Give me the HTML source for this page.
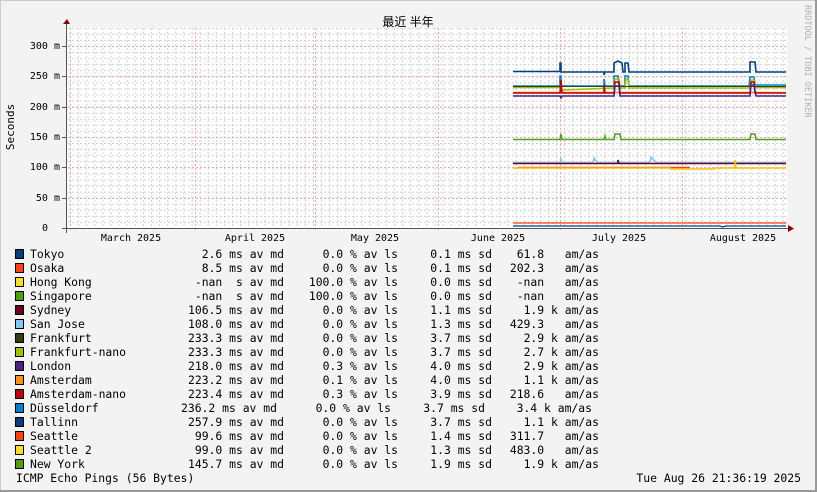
<!DOCTYPE html>
<html><head><meta charset="utf-8"><style>
html,body{margin:0;padding:0;background:#f3f3f3}
svg{display:block}
text{font-family:"DejaVu Sans Mono","Liberation Mono",monospace;font-size:11.4px;fill:#000;white-space:pre}
.s{font-size:10px}
</style></head><body>
<svg width="817" height="492" viewBox="0 0 817 492" xmlns="http://www.w3.org/2000/svg">
<defs>
<pattern id="gv" x="70" y="0" width="8.1" height="4" patternUnits="userSpaceOnUse"><rect x="0" y="0" width="1" height="2" fill="#d0d0d0"/></pattern>
<pattern id="gh" x="0" y="228" width="4" height="6.067" patternUnits="userSpaceOnUse"><rect x="0" y="0" width="2" height="1" fill="#d0d0d0"/></pattern>
<pattern id="mh" x="0" y="0" width="4" height="1" patternUnits="userSpaceOnUse"><rect width="2" height="1" fill="#f0a8a8"/></pattern>
<pattern id="mv" x="0" y="0" width="1" height="4" patternUnits="userSpaceOnUse"><rect width="1" height="2" fill="#f0a8a8"/></pattern>
</defs>
<rect x="0" y="0" width="817" height="492" fill="#f3f3f3"/>
<rect x="0" y="0" width="817" height="1" fill="#ccc"/><rect x="0" y="0" width="1" height="492" fill="#ccc"/>
<rect x="815" y="0" width="2" height="492" fill="#999"/><rect x="0" y="490" width="817" height="2" fill="#999"/>
<rect x="67" y="27" width="720" height="201" fill="#fff"/>
<rect x="68" y="27" width="719" height="201" fill="url(#gv)"/>
<rect x="68" y="27" width="719" height="201" fill="url(#gh)"/>
<g fill="url(#mh)">
<rect x="67" y="46" width="720" height="1"/><rect x="67" y="76" width="720" height="1"/><rect x="67" y="107" width="720" height="1"/><rect x="67" y="137" width="720" height="1"/><rect x="67" y="167" width="720" height="1"/><rect x="67" y="198" width="720" height="1"/>
</g>
<g fill="url(#mv)">
<rect x="70" y="27" width="1" height="204"/><rect x="195" y="27" width="1" height="204"/><rect x="315" y="27" width="1" height="204"/><rect x="438" y="27" width="1" height="204"/><rect x="560" y="27" width="1" height="204"/><rect x="682" y="27" width="1" height="204"/>
</g>
<rect x="66" y="24" width="1" height="209" fill="#555"/>
<rect x="62" y="228" width="728" height="1" fill="#555"/>
<path d="M63 24 L67 19 L70 24 Z" fill="#800"/>
<path d="M788 225 L794 228.5 L788 232 Z" fill="#800"/>
<g fill="#555"><rect x="62" y="46" width="4" height="1"/><rect x="62" y="76" width="4" height="1"/><rect x="62" y="107" width="4" height="1"/><rect x="62" y="137" width="4" height="1"/><rect x="62" y="167" width="4" height="1"/><rect x="62" y="198" width="4" height="1"/></g>
<g text-anchor="end">
<text x="60" y="49" class="s">300 m</text><text x="60" y="79" class="s">250 m</text><text x="60" y="110" class="s">200 m</text><text x="60" y="140" class="s">150 m</text><text x="60" y="170" class="s">100 m</text><text x="60" y="201" class="s">50 m</text><text x="48" y="231" class="s">0</text>
</g>
<g text-anchor="middle">
<text x="131" y="241" class="s">March 2025</text><text x="255" y="241" class="s">April 2025</text><text x="375" y="241" class="s">May 2025</text><text x="498" y="241" class="s">June 2025</text><text x="619" y="241" class="s">July 2025</text><text x="743" y="241" class="s">August 2025</text>
</g>
<text x="14" y="127" transform="rotate(-90 14 127)" text-anchor="middle" style="font-size:11px">Seconds</text>
<text x="408" y="26" text-anchor="middle" style="font-family:'Liberation Sans','Noto Sans CJK SC',sans-serif;font-size:12px">最近 半年</text>
<text x="805" y="5" transform="rotate(90 805 5)" style="font-size:8.5px;fill:#b0b0b0">RRDTOOL / TOBI OETIKER</text>
<g fill="none" stroke-width="1.6">
<polyline stroke="#004080" points="513,71.5 560,71.5 560,63 561,63 561,72 604,72 604,75 605,72 614,72 614,63 618,61 622,63 623,72 625,72 625,63 628,63 629,72 750,72 750,62 755,62 756,72 786,72"/>
<polyline stroke="#0080d0" points="513,86 560,86 560,76 561,76 561,86 604,86 604,79 605,86 614,86 614,76 618,76 619,86 625,86 625,76 628,76 629,86 749,86 750,77 754,77 755,85 786,85"/>
<polyline stroke="#a0c000" points="513,87.5 560,87.5 561,90 614,88 615,79 619,79 620,88 625,88 626,79 628,79 629,88 750,88 751,80 754,80 755,87.5 786,87.5"/>
<polyline stroke="#304010" stroke-width="1" points="513,86.5 786,86.5"/>
<polyline stroke="#ff8000" points="513,92.5 786,92.5"/>
<polyline stroke="#c00000" points="513,93 560,93 561,80 562,93 604,93 604,85 605,93 614,93 615,82 619,82 620,93 750,93 751,82 754,82 755,93 786,93"/>
<polyline stroke="#502080" points="513,96 560,96 561,98 562,96 614,96 615,86 619,86 620,96 750,96 751,85 754,85 756,96 786,96"/>
<polyline stroke="#50a020" points="513,139.5 560,139.5 561,134 562,139.5 604,139.5 605,136 606,139.5 614,139.5 615,134 620,134 621,139.5 750,139.5 751,134 755,134 756,139.5 786,139.5"/>
<polyline stroke="#80c8ff" points="513,162.5 560,162.5 561,159 562,162.5 593,162.5 594,158 596,161 597,162.5 650,162.5 651,157 654,160 656,162.5 786,162.5"/>
<polyline stroke="#700020" points="513,163.5 618,163.5 618,160 619,163.5 786,163.5"/>
<polyline stroke="#ff4000" points="518,167.5 690,167.5"/>
<polyline stroke="#ffc000" points="513,168 560,168 670,168 671,169 714,169 715,168 735,168 735,160 736,168 786,168"/>
<polyline stroke="#ff4000" stroke-width="1.2" points="513,223 786,223"/>
<polyline stroke="#004080" stroke-width="1.2" points="513,226 720,226 722,227 726,226 786,226"/>
</g>
<g>
<rect x="15.5" y="249.5" width="8" height="9" fill="#004080" stroke="#000"/>
<rect x="15.5" y="263.5" width="8" height="9" fill="#ff4010" stroke="#000"/>
<rect x="15.5" y="277.5" width="8" height="9" fill="#ffe020" stroke="#000"/>
<rect x="15.5" y="291.5" width="8" height="9" fill="#50a010" stroke="#000"/>
<rect x="15.5" y="305.5" width="8" height="9" fill="#700020" stroke="#000"/>
<rect x="15.5" y="319.5" width="8" height="9" fill="#80c8ff" stroke="#000"/>
<rect x="15.5" y="333.5" width="8" height="9" fill="#304010" stroke="#000"/>
<rect x="15.5" y="347.5" width="8" height="9" fill="#a0c000" stroke="#000"/>
<rect x="15.5" y="361.5" width="8" height="9" fill="#502080" stroke="#000"/>
<rect x="15.5" y="375.5" width="8" height="9" fill="#ff9010" stroke="#000"/>
<rect x="15.5" y="389.5" width="8" height="9" fill="#c00000" stroke="#000"/>
<rect x="15.5" y="403.5" width="8" height="9" fill="#0080d0" stroke="#000"/>
<rect x="15.5" y="417.5" width="8" height="9" fill="#004080" stroke="#000"/>
<rect x="15.5" y="431.5" width="8" height="9" fill="#ff4010" stroke="#000"/>
<rect x="15.5" y="445.5" width="8" height="9" fill="#ffe020" stroke="#000"/>
<rect x="15.5" y="459.5" width="8" height="9" fill="#50a010" stroke="#000"/>
</g>
<g>
<text x="30" y="258">Tokyo</text><text x="30" y="272">Osaka</text><text x="30" y="286">Hong Kong</text><text x="30" y="300">Singapore</text><text x="30" y="314">Sydney</text><text x="30" y="328">San Jose</text><text x="30" y="342">Frankfurt</text><text x="30" y="356">Frankfurt-nano</text><text x="30" y="370">London</text><text x="30" y="384">Amsterdam</text><text x="30" y="398">Amsterdam-nano</text><text x="30" y="412">Düsseldorf</text><text x="30" y="426">Tallinn</text><text x="30" y="440">Seattle</text><text x="30" y="454">Seattle 2</text><text x="30" y="468">New York</text>
</g>
<g text-anchor="end">
<text x="284" y="258">2.6 ms av md</text><text x="398" y="258">0.0 % av ls</text><text x="492" y="258">0.1 ms sd</text><text x="599" y="258">61.8   am/as</text>
<text x="284" y="272">8.5 ms av md</text><text x="398" y="272">0.0 % av ls</text><text x="492" y="272">0.1 ms sd</text><text x="599" y="272">202.3   am/as</text>
<text x="284" y="286">-nan  s av md</text><text x="398" y="286">100.0 % av ls</text><text x="492" y="286">0.0 ms sd</text><text x="599" y="286">-nan   am/as</text>
<text x="284" y="300">-nan  s av md</text><text x="398" y="300">100.0 % av ls</text><text x="492" y="300">0.0 ms sd</text><text x="599" y="300">-nan   am/as</text>
<text x="284" y="314">106.5 ms av md</text><text x="398" y="314">0.0 % av ls</text><text x="492" y="314">1.1 ms sd</text><text x="599" y="314">1.9 k am/as</text>
<text x="284" y="328">108.0 ms av md</text><text x="398" y="328">0.0 % av ls</text><text x="492" y="328">1.3 ms sd</text><text x="599" y="328">429.3   am/as</text>
<text x="284" y="342">233.3 ms av md</text><text x="398" y="342">0.0 % av ls</text><text x="492" y="342">3.7 ms sd</text><text x="599" y="342">2.9 k am/as</text>
<text x="284" y="356">233.3 ms av md</text><text x="398" y="356">0.0 % av ls</text><text x="492" y="356">3.7 ms sd</text><text x="599" y="356">2.7 k am/as</text>
<text x="284" y="370">218.0 ms av md</text><text x="398" y="370">0.3 % av ls</text><text x="492" y="370">4.0 ms sd</text><text x="599" y="370">2.9 k am/as</text>
<text x="284" y="384">223.2 ms av md</text><text x="398" y="384">0.1 % av ls</text><text x="492" y="384">4.0 ms sd</text><text x="599" y="384">1.1 k am/as</text>
<text x="284" y="398">223.4 ms av md</text><text x="398" y="398">0.3 % av ls</text><text x="492" y="398">3.9 ms sd</text><text x="599" y="398">218.6   am/as</text>
<text x="277" y="412">236.2 ms av md</text><text x="391" y="412">0.0 % av ls</text><text x="485" y="412">3.7 ms sd</text><text x="592" y="412">3.4 k am/as</text>
<text x="284" y="426">257.9 ms av md</text><text x="398" y="426">0.0 % av ls</text><text x="492" y="426">3.7 ms sd</text><text x="599" y="426">1.1 k am/as</text>
<text x="284" y="440">99.6 ms av md</text><text x="398" y="440">0.0 % av ls</text><text x="492" y="440">1.4 ms sd</text><text x="599" y="440">311.7   am/as</text>
<text x="284" y="454">99.0 ms av md</text><text x="398" y="454">0.0 % av ls</text><text x="492" y="454">1.3 ms sd</text><text x="599" y="454">483.0   am/as</text>
<text x="284" y="468">145.7 ms av md</text><text x="398" y="468">0.0 % av ls</text><text x="492" y="468">1.9 ms sd</text><text x="599" y="468">1.9 k am/as</text>
</g>
<text x="16" y="482">ICMP Echo Pings (56 Bytes)</text>
<text x="801" y="482" text-anchor="end">Tue Aug 26 21:36:19 2025</text>
</svg>
</body></html>
